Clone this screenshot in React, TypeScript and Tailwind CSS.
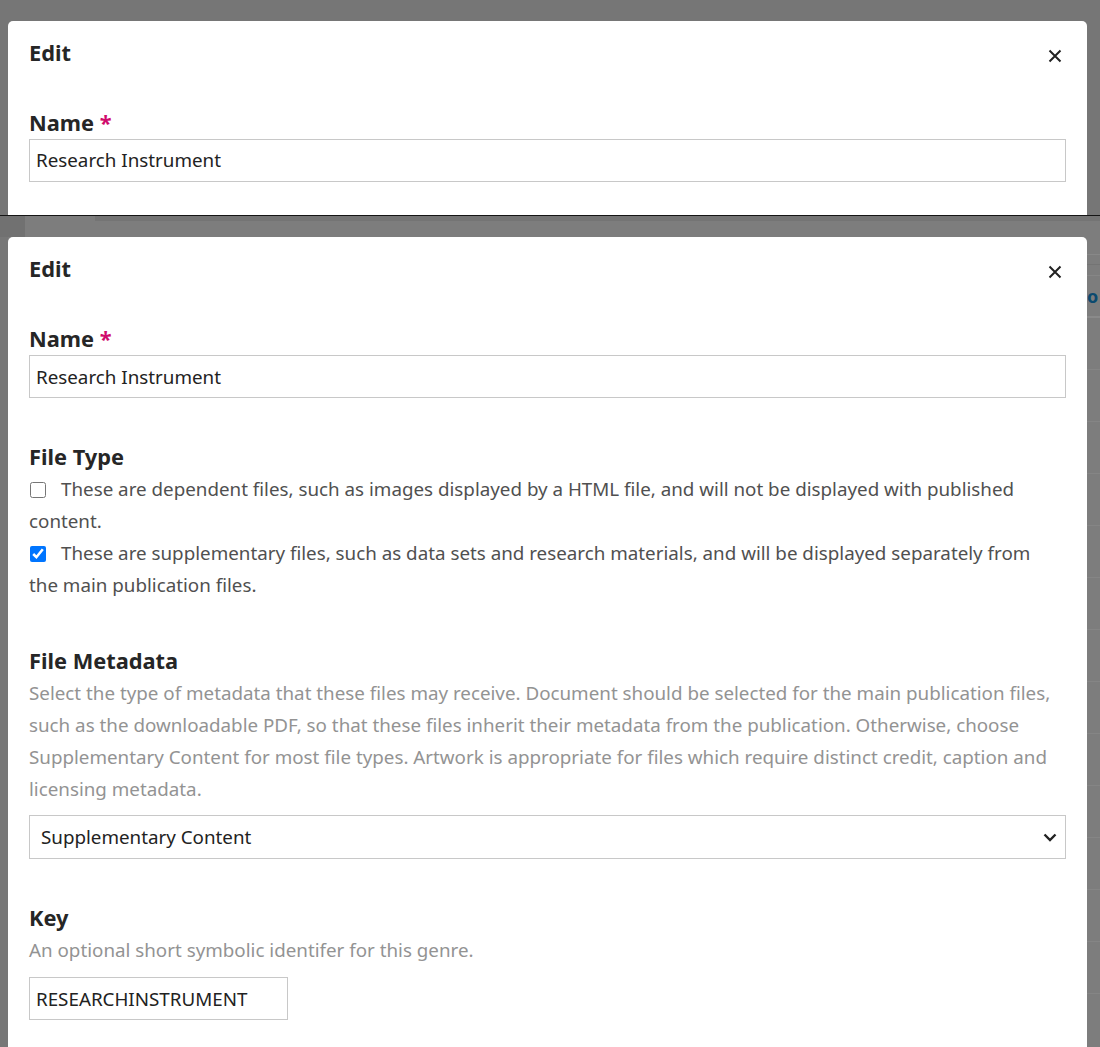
import { ReactNode } from 'react';

const font = { fontFamily: '"Noto Sans", "Open Sans", sans-serif' };

const CloseIcon = () => (
  <svg width="14" height="14" viewBox="0 0 14 14" className="text-[#222]">
    <path d="M1.5 1.5 L12.5 12.5 M12.5 1.5 L1.5 12.5" stroke="currentColor" strokeWidth="2" fill="none" />
  </svg>
);

const Chevron = () => (
  <svg width="14" height="9" viewBox="0 0 14 9" className="text-[#222]">
    <path d="M1.5 1.5 L7 7 L12.5 1.5" stroke="currentColor" strokeWidth="2.4" fill="none" />
  </svg>
);

const Label = ({ children, className = '' }: { children: ReactNode; className?: string }) => (
  <div className={`text-[21.8px] font-bold leading-[32px] text-[#262626] ${className}`}>{children}</div>
);

const Header = () => (
  <div className="flex items-start justify-between pt-[16px]">
    <div className="text-[21.8px] font-bold leading-[32px] text-[#262626]">Edit</div>
    <div className="mt-[12px] mr-[4px]">
      <CloseIcon />
    </div>
  </div>
);

const NameField = () => (
  <>
    <Label className="mt-[38px]">
      Name <span className="text-[#d00a6c]">*</span>
    </Label>
    <div className="h-[43px] border border-[#c8c8c8] px-[6px] flex items-center text-[18.8px] text-[#222]">
      Research Instrument
    </div>
  </>
);

// background rows peeking out on the right of the lower modal
const BackgroundStrip = () => (
  <div className="flex-1 flex flex-col">
    <div className="h-[18px] border-b border-[#888]" />
    <div className="h-[10px] border-b border-[#747474]" />
    <div className="h-[11px] border-b border-[#868686]" />
    <div className="h-[42px] border-b-2 border-[#8a8a8a] flex items-center text-[18px] font-bold text-[#0b4a6f] leading-none">
      o
    </div>
    {Array.from({ length: 13 }).map((_, i) => (
      <div key={i} className="h-[52px] border-b border-[#858585] shrink-0" />
    ))}
  </div>
);

export default function App() {
  return (
    <div className="w-[1100px] h-[1047px] overflow-hidden" style={font}>
      {/* first capture */}
      <div className="h-[215px] overflow-hidden bg-[#767676] pt-[21px] flex">
        <div className="w-[8px] shrink-0" />
        <div className="w-[1079px] bg-white rounded-t-[5px] px-[21px]">
          <Header />
          <NameField />
        </div>
        <div className="flex-1" />
      </div>
      <div className="h-[1px] bg-[#151515]" />

      {/* second capture */}
      <div className="bg-[#7d7d7d] h-[831px] flex flex-col">
        <div className="h-[21px] flex shrink-0">
          <div className="w-[25px] bg-[#717171]" />
          <div className="w-[70px]" />
          <div className="flex-1">
            <div className="h-[5px] bg-[#747474]" />
          </div>
        </div>
        <div className="flex flex-1 min-h-0">
          <div className="w-[8px] shrink-0 bg-[#777]" />
          <div className="w-[1079px] shrink-0 bg-white rounded-t-[5px] px-[21px] text-[18.8px] leading-[32px]">
            <Header />
            <NameField />

            <Label className="mt-[43px]">File Type</Label>
            <div className="text-[#505050] pr-[20px]">
              <label className="block">
                <input type="checkbox" className="w-4 h-4 m-0 ml-[1px] mr-[15px] align-[-2px]" />
                These are dependent files, such as images displayed by a HTML file, and will not be displayed with published content.
              </label>
              <label className="block">
                <input type="checkbox" defaultChecked className="w-4 h-4 m-0 ml-[1px] mr-[15px] align-[-2px]" />
                These are supplementary files, such as data sets and research materials, and will be displayed separately from the main publication files.
              </label>
            </div>

            <Label className="mt-[44px]">File Metadata</Label>
            <div className="text-[#939393]">
              Select the type of metadata that these files may receive. Document should be selected for the main publication files, such as the downloadable PDF, so that these files inherit their metadata from the publication. Otherwise, choose Supplementary Content for most file types. Artwork is appropriate for files which require distinct credit, caption and licensing metadata.
            </div>
            <div className="mt-[10px] h-[44px] border border-[#c8c8c8] pl-[11px] pr-[8px] flex items-center justify-between text-[#222]">
              <span>Supplementary Content</span>
              <Chevron />
            </div>

            <Label className="mt-[43px]">Key</Label>
            <div className="text-[#939393]">An optional short symbolic identifer for this genre.</div>
            <div className="mt-[11px] w-[259px] h-[43px] border border-[#c8c8c8] px-[6px] flex items-center text-[#222]">
              RESEARCHINSTRUMENT
            </div>
          </div>
          <BackgroundStrip />
        </div>
      </div>
    </div>
  );
}
